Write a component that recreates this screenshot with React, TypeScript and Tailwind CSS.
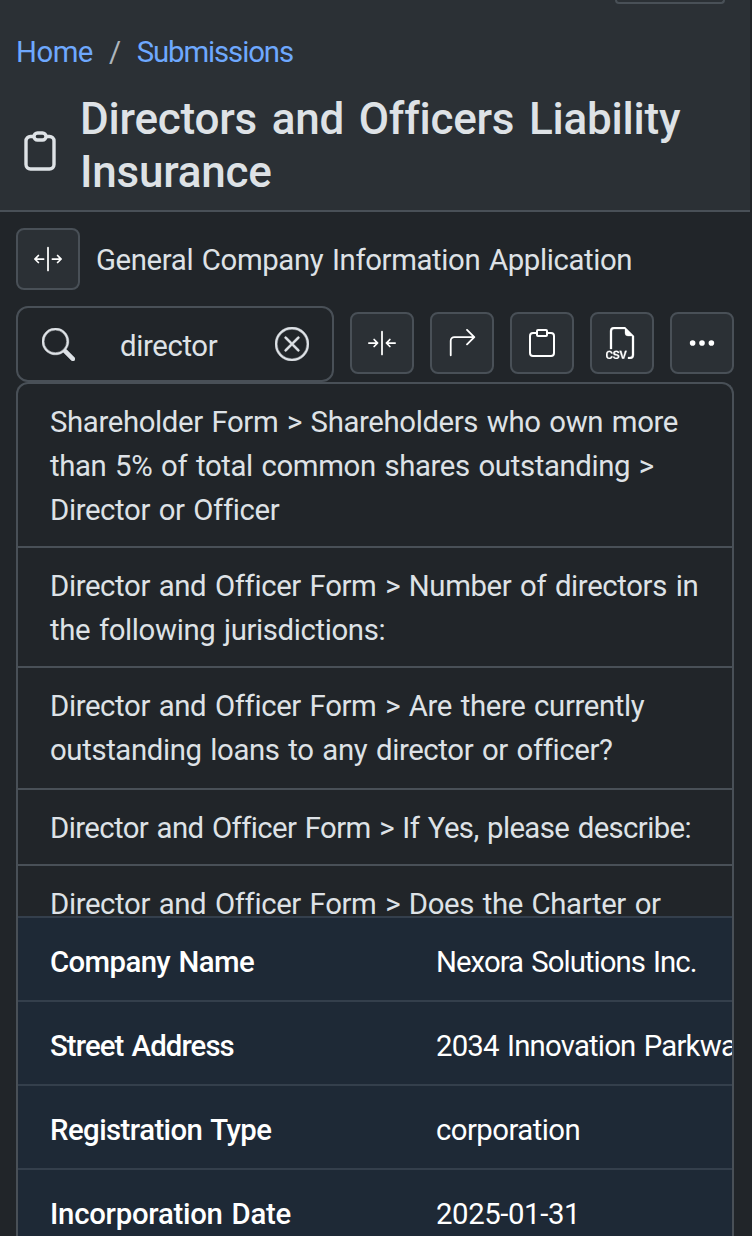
import {
  BsArrow90DegRight,
  BsArrowsCollapseVertical,
  BsArrowsExpandVertical,
  BsFiletypeCsv,
  BsSearch,
  BsThreeDots,
  BsXCircle,
} from 'react-icons/bs';

const results = [
  {
    text: 'Shareholder Form > Shareholders who own more than 5% of total common shares outstanding > Director or Officer',
    h: 'h-[164px]',
    fit: '',
  },
  {
    text: 'Director and Officer Form > Number of directors in the following jurisdictions:',
    h: 'h-[120px]',
    fit: '',
  },
  {
    text: 'Director and Officer Form > Are there currently outstanding loans to any director or officer?',
    h: 'h-[122px]',
    fit: '',
  },
  { text: 'Director and Officer Form > If Yes, please describe:', h: 'h-[76px]', fit: 'tracking-[-0.6px]' },
  { text: 'Director and Officer Form > Does the Charter or', h: 'h-[76px]', fit: '' },
];

const rows = [
  { label: 'Company Name', value: 'Nexora Solutions Inc.', labelFit: 'tracking-[-0.6px]', valueFit: 'tracking-[-0.95px]' },
  { label: 'Street Address', value: '2034 Innovation Parkway', labelFit: 'tracking-[-0.9px]', valueFit: 'tracking-[-0.8px]' },
  { label: 'Registration Type', value: 'corporation', labelFit: 'tracking-[-0.55px]', valueFit: 'tracking-[-0.55px]' },
  { label: 'Incorporation Date', value: '2025-01-31', labelFit: 'tracking-[-0.25px]', valueFit: 'tracking-[-0.4px]' },
];

function ClipboardTitle() {
  return (
    <svg viewBox="0 0 32 40" className="w-[32px] h-[40px] mt-[10px] shrink-0" fill="none" stroke="currentColor" strokeWidth="3.4" strokeLinejoin="round">
      <path d="M10 5.5H6.5A4.5 4.5 0 0 0 2 10v23.5A4.5 4.5 0 0 0 6.5 38h19a4.5 4.5 0 0 0 4.5-4.5V10a4.5 4.5 0 0 0-4.5-4.5H22" />
      <rect x="10" y="2" width="12" height="7" rx="3.5" />
    </svg>
  );
}

function ClipboardSmall() {
  return (
    <svg viewBox="0 0 26 28" className="w-[26px] h-[28px]" fill="none" stroke="currentColor" strokeWidth="2" strokeLinejoin="round">
      <path d="M8 4H4a3 3 0 0 0-3 3v17a3 3 0 0 0 3 3h18a3 3 0 0 0 3-3V7a3 3 0 0 0-3-3h-4" />
      <rect x="8" y="1" width="10" height="6" rx="1" />
    </svg>
  );
}

const actions = [
  { key: 'collapse', icon: <BsArrowsCollapseVertical className="w-[28px] h-[28px]" /> },
  { key: 'forward', icon: <BsArrow90DegRight className="w-[29px] h-[29px]" /> },
  { key: 'copy', icon: <ClipboardSmall /> },
  { key: 'csv', icon: <BsFiletypeCsv className="w-[32px] h-[32px]" stroke="currentColor" strokeWidth={0.15} /> },
  { key: 'more', icon: <BsThreeDots className="w-[30px] h-[30px]" /> },
];

export default function App() {
  return (
    <div className="h-[1236px] w-[752px] overflow-hidden bg-[#212529] text-[#dee2e6] font-['Roboto',sans-serif] text-[29.33px] leading-[44px] tracking-[-0.37px] [word-spacing:1.8px]">
      {/* Header */}
      <div className="w-[750px] h-[212px] bg-[#2b3035] border-b-2 border-[#495057]">
        <div className="flex justify-end pr-[25px]">
          <div className="w-[110px] h-[4px] border-2 border-t-0 border-[#495057] rounded-b-xl" />
        </div>
        <div className="flex items-center px-4 mt-[26px] h-[44px]">
          <a className="text-[#6ea8fe] tracking-[-0.5px]">Home</a>
          <span className="text-[#adb5bd] px-[16px]">/</span>
          <a className="text-[#6ea8fe] tracking-[-1.1px]">Submissions</a>
        </div>
        <div className="flex items-center mt-[19px] pl-[24px]">
          <ClipboardTitle />
          <h1 className="ml-[24px] text-[44px] leading-[53px] font-medium tracking-[-0.22px] [word-spacing:4px]">
            Directors and Officers Liability Insurance
          </h1>
        </div>
      </div>

      {/* Section title */}
      <div className="flex items-center mx-4 mt-[16px] h-[62px]">
        <button className="flex items-center justify-center w-[64px] h-[62px] bg-[#2b3035] border-2 border-[#495057] rounded-lg text-white">
          <BsArrowsExpandVertical className="w-[28px] h-[28px]" />
        </button>
        <span className="ml-4 pt-[2px]">General Company Information Application</span>
      </div>

      {/* Toolbar */}
      <div className="flex items-start gap-4 mx-4 mt-[16px] h-[76px]">
        <div className="flex items-center w-[318px] h-[76px] border-2 border-[#495057] rounded-xl pl-[24px] pr-[23px]">
          <BsSearch className="w-[33px] h-[33px] shrink-0" stroke="currentColor" strokeWidth={0.25} />
          <span className="ml-[45px] flex-1 pt-[4px]">director</span>
          <BsXCircle className="w-[34px] h-[34px] shrink-0" stroke="currentColor" strokeWidth={0.2} />
        </div>
        {actions.map((a) => (
          <button
            key={a.key}
            className="flex items-center justify-center w-[64px] h-[62px] mt-[6px] bg-[#2b3035] border-2 border-[#495057] rounded-lg text-white"
          >
            {a.icon}
          </button>
        ))}
      </div>

      {/* Results + details */}
      <div className="ml-4 w-[718px] border-x-2 border-t-2 border-[#495057] rounded-t-xl overflow-hidden">
        <div className="h-[532px] overflow-hidden">
          {results.map((r) => (
            <div key={r.text} className={`${r.h} ${r.fit} px-[32px] pt-[16px] border-b-2 border-[#495057]`}>
              {r.text}
            </div>
          ))}
        </div>
        <div className="bg-[#1e2936] border-t-2 border-[#343f4c] text-white">
          {rows.map((row) => (
            <div key={row.label} className="flex items-center h-[84px] pl-[32px] pt-[6px] border-b-2 border-[#343f4c] whitespace-nowrap overflow-hidden">
              <span className={`w-[386px] shrink-0 font-medium ${row.labelFit}`}>{row.label}</span>
              <span className={row.valueFit}>{row.value}</span>
            </div>
          ))}
        </div>
      </div>
    </div>
  );
}
